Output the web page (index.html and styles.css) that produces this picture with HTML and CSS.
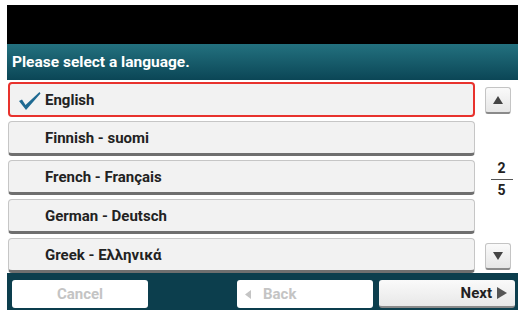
FILE: index.html
```html
<!DOCTYPE html>
<html lang="en">
<head>
  <meta charset="UTF-8">
  <title>Language Selection</title>
  <link rel="stylesheet" href="styles.css">
</head>
<body>
  <div class="screen">
    <div class="topbar"></div>
    <div class="header">Please select a language.</div>

    <div class="content">
      <ul class="langs">
        <li class="lang selected">
          <svg class="check" width="24" height="20" viewBox="0 0 24 20">
            <path d="M1 10 L4 8.5 L7.5 14 L21.5 1 L22.5 2.5 L8 19 Z" fill="#1f6a92"/>
          </svg>
          English
        </li>
        <li class="lang">Finnish - suomi</li>
        <li class="lang">French - Français</li>
        <li class="lang">German - Deutsch</li>
        <li class="lang">Greek - Ελληνικά</li>
      </ul>

      <div class="pager">
        <button class="scroll" type="button">
          <svg width="10" height="8" viewBox="0 0 10 8"><path d="M5 0 L10 8 L0 8 Z" fill="#444"/></svg>
        </button>
        <div class="page">
          <span>2</span>
          <span class="line"></span>
          <span>5</span>
        </div>
        <button class="scroll" type="button">
          <svg width="10" height="8" viewBox="0 0 10 8"><path d="M0 0 L10 0 L5 8 Z" fill="#444"/></svg>
        </button>
      </div>
    </div>

    <div class="footer">
      <button class="fbtn off center" type="button">Cancel</button>
      <button class="fbtn off back" type="button">
        <svg width="6" height="9" viewBox="0 0 6 9"><path d="M6 0 L6 9 L0 4.5 Z" fill="#c4c4c4"/></svg>
        Back
      </button>
      <button class="fbtn next" type="button">
        Next
        <svg width="10" height="12" viewBox="0 0 10 12"><path d="M0 0 L10 6 L0 12 Z" fill="#555"/></svg>
      </button>
    </div>
  </div>
</body>
</html>
```

FILE: styles.css
```css
body {
  margin: 0;
  padding: 5px 5px 8px 7px;
  background: #fff;
  font-family: Roboto, "Liberation Sans", sans-serif;
}
.screen {
  width: 511px;
}
.topbar {
  height: 39px;
  background: #000;
}
.header {
  height: 36px;
  padding-left: 5px;
  display: flex;
  align-items: center;
  background: linear-gradient(#23717f, #0b4656);
  color: #fff;
  font-weight: bold;
  font-size: 15.5px;
}
.content {
  display: flex;
  height: 193px;
  background: #fff;
}
.langs {
  list-style: none;
  margin: 0;
  padding: 2px 0 0 1px;
  width: 467px;
  display: flex;
  flex-direction: column;
  gap: 4px;
}
.lang {
  box-sizing: border-box;
  height: 35px;
  padding-left: 36px;
  display: flex;
  align-items: center;
  background: #f2f2f2;
  border: 1px solid #c6c6c6;
  border-bottom: 3px solid #6f6f6f;
  border-radius: 4px;
  color: #222;
  font-weight: bold;
  font-size: 15px;
  position: relative;
}
.lang.selected {
  border: 2px solid #e8322d;
  padding-left: 35px;
}
.check {
  position: absolute;
  left: 8px;
  top: 7px;
}
.pager {
  width: 43px;
  box-sizing: border-box;
  padding: 7px 0 3px 10px;
  display: flex;
  flex-direction: column;
  justify-content: space-between;
}
.scroll {
  width: 26px;
  height: 27px;
  padding: 0;
  display: flex;
  align-items: center;
  justify-content: center;
  background: linear-gradient(#fafafa, #e6e6e6);
  border: 1px solid #c4c4c4;
  border-bottom: 2px solid #8a8a8a;
  border-radius: 3px;
}
.page {
  display: flex;
  flex-direction: column;
  align-items: center;
  color: #222;
  font-weight: bold;
  font-size: 14px;
  line-height: 14px;
}
.page .line {
  width: 22px;
  height: 1px;
  background: #555;
  margin: 4px 0 3px;
}
.footer {
  height: 37px;
  box-sizing: border-box;
  padding: 7px 3px 2px 5px;
  display: flex;
  gap: 6px;
  background: #0c3e4d;
}
.fbtn {
  width: 136px;
  height: 28px;
  display: flex;
  align-items: center;
  gap: 8px;
  background: #fff;
  border: none;
  border-radius: 3px;
  font-family: Roboto, "Liberation Sans", sans-serif;
  font-weight: bold;
  font-size: 15px;
}
.fbtn.off {
  color: #c4c4c4;
}
.fbtn.center {
  justify-content: center;
}
.back {
  margin-left: auto;
  padding-left: 8px;
  gap: 12px;
}
.next {
  justify-content: flex-end;
  padding-right: 8px;
  gap: 5px;
  background: linear-gradient(#fafafa, #e8e8e8);
  border-bottom: 2px solid #8a8a8a;
  color: #222;
}
```
